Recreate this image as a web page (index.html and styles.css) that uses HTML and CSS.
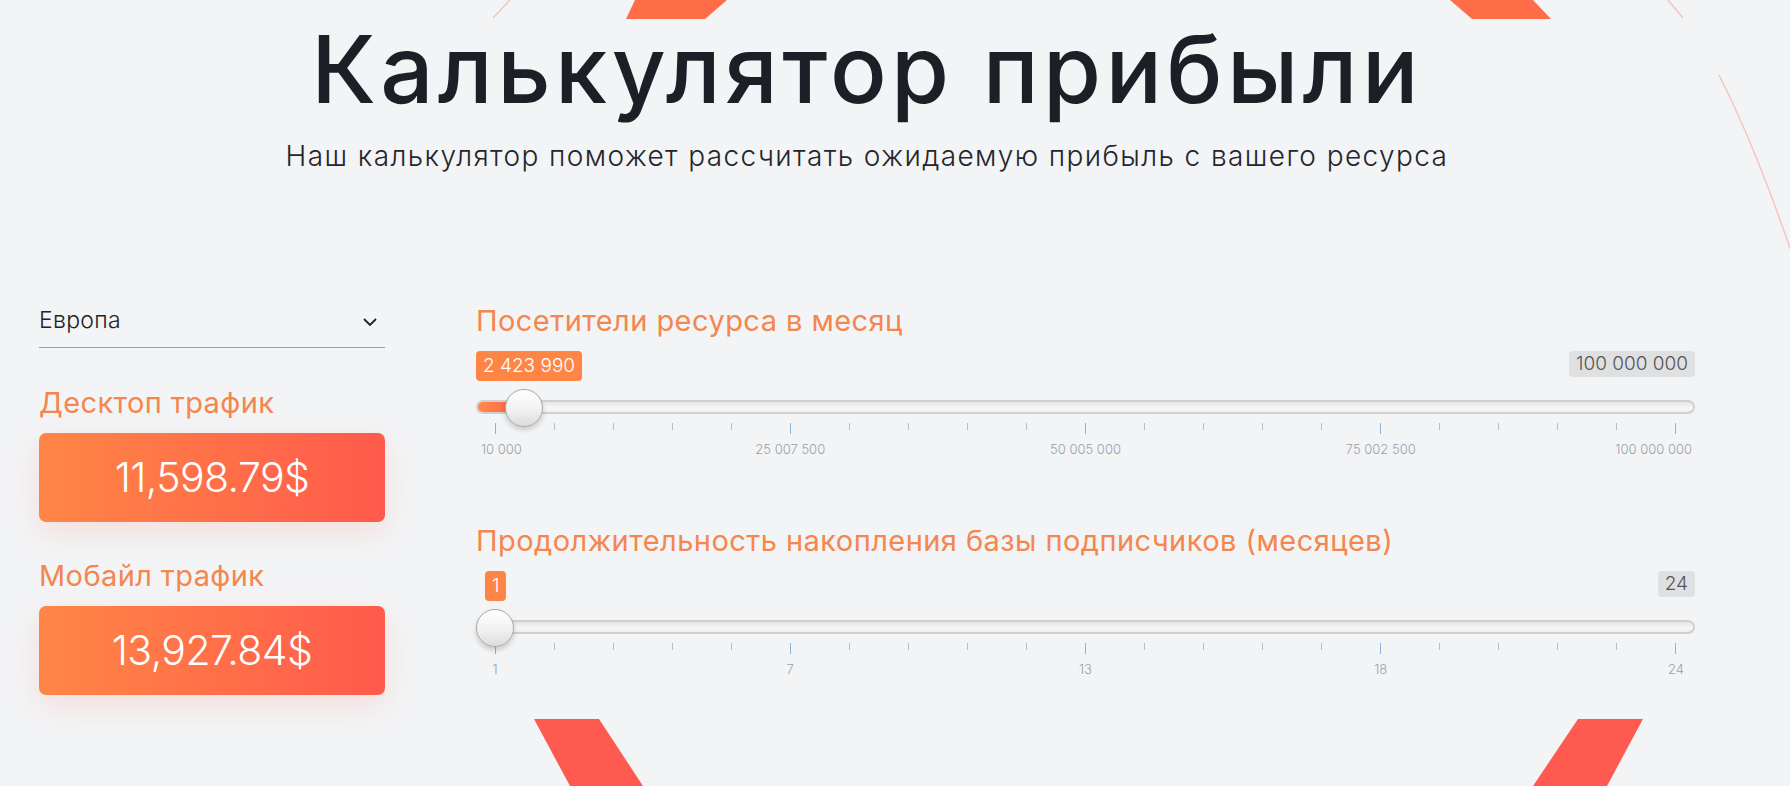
FILE: index.html
```html
<!DOCTYPE html>
<html lang="ru">
<head>
<meta charset="utf-8">
<title>Калькулятор прибыли</title>
<link rel="stylesheet" href="styles.css">
</head>
<body>
<div class="bg" aria-hidden="true">
  <svg class="bg-art" width="1790" height="786" viewBox="0 0 1790 786">
    <polygon class="ring-top" points="635,0 727,0 705,19 626,19"/>
    <polygon class="ring-top" points="1450,0 1533,0 1551,19 1472,19"/>
    <polygon class="ring-bottom" points="534,719 599,719 643,786 570,786"/>
    <polygon class="ring-bottom" points="1578,719 1643,719 1607,786 1533,786"/>
    <path class="thin" d="M510 0 L493 18"/>
    <path class="thin" d="M1668 0 L1683 18"/>
    <path class="thin" d="M1719 75 Q1756 148 1792 254"/>
  </svg>
</div>
<div class="page">
  <header class="hero">
    <h1 class="title">Калькулятор прибыли</h1>
    <p class="subtitle">Наш калькулятор поможет рассчитать ожидаемую прибыль с вашего ресурса</p>
  </header>
  <div class="calc">
    <aside class="results">
      <div class="select">
        <span class="select-value">Европа</span>
        <svg class="chev" width="14" height="8" viewBox="0 0 14 8"><path d="M1 1 L7 7 L13 1"/></svg>
      </div>
      <div class="result">
        <div class="result-label">Десктоп трафик</div>
        <div class="result-box">11,598.79$</div>
      </div>
      <div class="result">
        <div class="result-label">Мобайл трафик</div>
        <div class="result-box">13,927.84$</div>
      </div>
    </aside>
    <div class="sliders">
      <div class="field">
        <div class="field-label">Посетители ресурса в месяц</div>
        <div class="slider">
          <div class="slider-badges">
            <span class="badge badge-from">2 423 990</span>
            <span class="badge badge-max">100 000 000</span>
          </div>
          <div class="track-area">
            <div class="track"><div class="fill" style="width:48px"></div></div>
            <div class="handle" style="left:29px"></div>
          </div>
          <div class="grid">
            <div class="ticks">
              <i class="tick major"></i><i class="tick"></i><i class="tick"></i><i class="tick"></i><i class="tick"></i>
              <i class="tick major"></i><i class="tick"></i><i class="tick"></i><i class="tick"></i><i class="tick"></i>
              <i class="tick major"></i><i class="tick"></i><i class="tick"></i><i class="tick"></i><i class="tick"></i>
              <i class="tick major"></i><i class="tick"></i><i class="tick"></i><i class="tick"></i><i class="tick"></i>
              <i class="tick major"></i>
            </div>
            <div class="grid-labels">
              <span class="grid-label grid-label-start" style="left:0%">10 000</span>
              <span class="grid-label" style="left:25%">25 007 500</span>
              <span class="grid-label" style="left:50%">50 005 000</span>
              <span class="grid-label" style="left:75%">75 002 500</span>
              <span class="grid-label grid-label-end" style="left:100%">100 000 000</span>
            </div>
          </div>
        </div>
      </div>
      <div class="field">
        <div class="field-label">Продолжительность накопления базы подписчиков (месяцев)</div>
        <div class="slider">
          <div class="slider-badges">
            <span class="badge badge-from" style="margin-left:9px">1</span>
            <span class="badge badge-max">24</span>
          </div>
          <div class="track-area">
            <div class="track"><div class="fill" style="width:0px"></div></div>
            <div class="handle" style="left:0px"></div>
          </div>
          <div class="grid">
            <div class="ticks">
              <i class="tick major"></i><i class="tick"></i><i class="tick"></i><i class="tick"></i><i class="tick"></i>
              <i class="tick major"></i><i class="tick"></i><i class="tick"></i><i class="tick"></i><i class="tick"></i>
              <i class="tick major"></i><i class="tick"></i><i class="tick"></i><i class="tick"></i><i class="tick"></i>
              <i class="tick major"></i><i class="tick"></i><i class="tick"></i><i class="tick"></i><i class="tick"></i>
              <i class="tick major"></i>
            </div>
            <div class="grid-labels">
              <span class="grid-label" style="left:0%">1</span>
              <span class="grid-label" style="left:25%">7</span>
              <span class="grid-label" style="left:50%">13</span>
              <span class="grid-label" style="left:75%">18</span>
              <span class="grid-label" style="left:100%">24</span>
            </div>
          </div>
        </div>
      </div>
    </div>
  </div>
</div>
</body>
</html>
```

FILE: styles.css
```css
* { box-sizing: border-box; }
html, body { margin: 0; padding: 0; }
body {
  background: #f3f4f6;
  font-family: Inter, "Noto Sans", sans-serif;
  color: #1d1e26;
  width: 1790px;
  height: 786px;
  overflow: hidden;
  position: relative;
}
.bg { position: absolute; left: 0; top: 0; width: 1790px; height: 786px; z-index: 0; pointer-events: none; }
.bg-art { display: block; }
.ring-top { fill: #ff6c48; }
.ring-bottom { fill: #ff5a50; }
.thin { fill: none; stroke: #f6c4c1; stroke-width: 1.5; }

.page {
  position: relative;
  z-index: 1;
  width: 1656px;
  margin-left: 39px;
  padding-top: 22px;
}
.hero { text-align: center; }
.title {
  margin: 0;
  font-size: 94px;
  line-height: 94px;
  font-weight: 500;
  color: #1d1e26;
  letter-spacing: 4.3px;
}
.subtitle {
  margin: 27px 0 0;
  font-size: 28px;
  line-height: 27px;
  font-weight: 300;
  color: #25262b;
  letter-spacing: 1.4px;
}

.calc { display: flex; margin-top: 133px; }
.results { width: 346px; flex: none; padding-top: 3px; }
.select {
  display: flex;
  justify-content: space-between;
  align-items: center;
  font-size: 23px;
  line-height: 28px;
  font-weight: 300;
  color: #222;
  padding: 0 8px 13px 0;
  border-bottom: 1px solid #f2806b;
  letter-spacing: 0.3px;
}
.chev { display: block; margin-top: 4px; }
.chev path { fill: none; stroke: #222; stroke-width: 1.8; }
.result { margin-top: 37px; }
.result + .result { margin-top: 36px; }
.result-label {
  font-size: 29px;
  line-height: 36px;
  color: #f5864e;
  letter-spacing: 0.4px;
}
.result-box {
  margin-top: 12px;
  height: 89px;
  border-radius: 7px;
  background: linear-gradient(90deg, #ff8646 0%, #ff5a4c 100%);
  color: #fff;
  font-size: 41px;
  line-height: 89px;
  font-weight: 300;
  letter-spacing: -0.6px;
  text-align: center;
  box-shadow: 0 10px 30px rgba(255, 110, 80, 0.16);
}

.sliders { flex: 1; margin-left: 91px; }
.field + .field { margin-top: 66px; }
.field-label {
  font-size: 29px;
  line-height: 36px;
  color: #f5864e;
  letter-spacing: 0.45px;
}
.slider { margin-top: 12px; }
.slider-badges { display: flex; justify-content: space-between; align-items: flex-start; height: 30px; }
.badge {
  display: block;
  font-size: 19px;
  font-weight: 300;
  padding: 0 7px;
  border-radius: 4px;
}
.badge-from { background: #ff8547; color: #fff; line-height: 30px; }
.badge-max { background: #dfe0e2; color: #555; line-height: 26px; }

.track-area { position: relative; height: 34px; margin-top: 8px; padding-top: 11px; }
.track {
  height: 14px;
  border-radius: 7px;
  border: 2px solid #d0d0d0;
  background: linear-gradient(180deg, #e6e6e6 0%, #f7f7f7 60%, #efefef 100%);
  overflow: hidden;
}
.fill {
  height: 100%;
  background: linear-gradient(90deg, #ff8a48, #ff5846);
}
.handle {
  position: absolute;
  top: 0;
  width: 38px;
  height: 38px;
  border-radius: 50%;
  border: 1.5px solid #a9a9a9;
  background: linear-gradient(180deg, #ffffff 0%, #f1f1f1 55%, #dcdcdc 100%);
  box-shadow: 0 3px 5px rgba(0, 0, 0, 0.18);
}

.grid { padding: 0 19px; }
.ticks { display: flex; justify-content: space-between; align-items: flex-start; height: 11px; }
.tick { display: block; width: 1px; height: 7px; background: #b9bec4; }
.tick.major { height: 11px; background: #8db3da; }
.grid-labels { position: relative; height: 16px; margin-top: 7px; }
.grid-label {
  position: absolute;
  top: 0;
  font-size: 13px;
  line-height: 16px;
  font-weight: 300;
  color: #9aa1a9;
  white-space: nowrap;
  transform: translateX(-50%);
}
.grid-label-start { transform: translateX(-14px); }
.grid-label-end { transform: translateX(calc(-100% + 16px)); }
```
